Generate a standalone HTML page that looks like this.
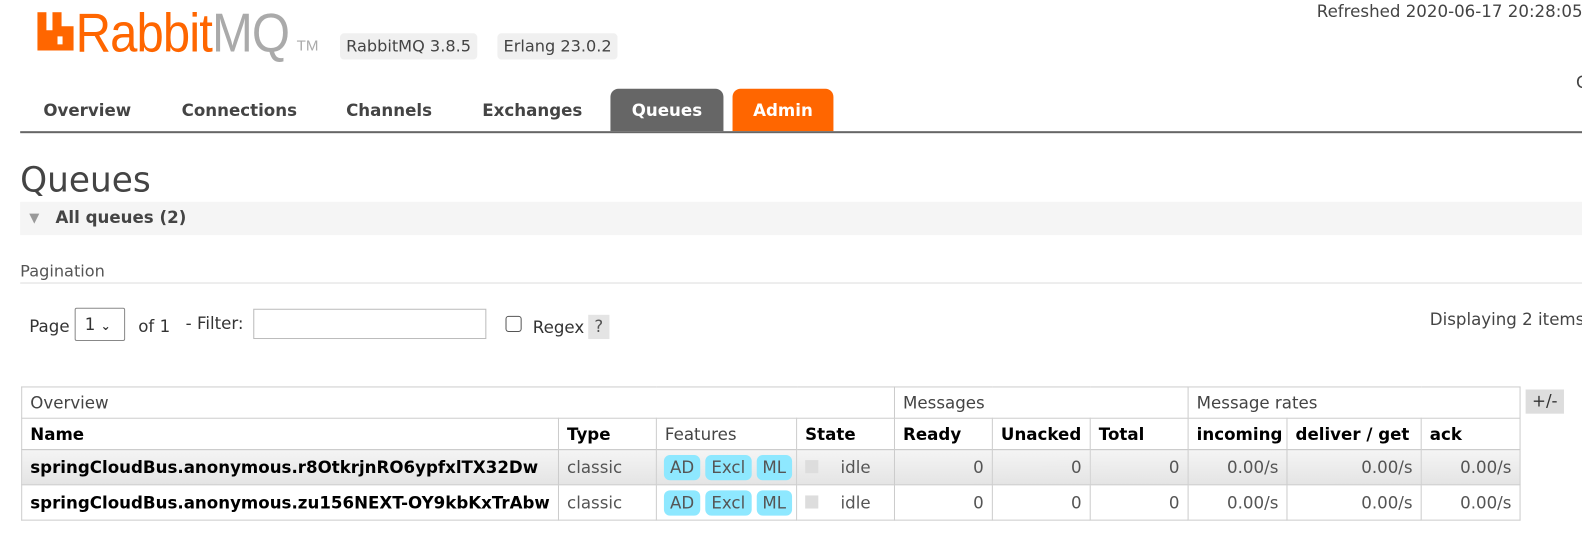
<!DOCTYPE html>
<html><head><meta charset="utf-8"><style>
*{margin:0;padding:0;box-sizing:border-box}
body{width:1582px;height:532px;background:#fff;font-family:"DejaVu Sans","Liberation Sans",sans-serif;color:#444;position:relative;overflow:hidden;font-size:16.5px}
#w{position:absolute;left:0;top:0;width:1582px;height:532px;transform:scale(1.009);transform-origin:0 0}
.a{position:absolute;white-space:nowrap}
.ver{top:33px;height:26px;background:#f0f0f0;border-radius:4px;padding:3px 6px;font-size:16px;color:#444;line-height:20px}
.tab{top:88px;height:42px;line-height:44px;font-weight:bold;font-size:16.5px;color:#444;border-radius:8px 8px 0 0}
table{border-collapse:collapse;position:absolute;left:21px;top:383px;font-size:16.5px;table-layout:fixed;width:1486px}
td{border:1px solid #ccc;padding:0 8px;white-space:nowrap;height:31px;overflow:hidden}
.h2 td{font-weight:bold;color:#000}
.h2 td.n{font-weight:normal;color:#444}
.r td{height:35px;color:#555;background:#fff}
.r1 td{background:linear-gradient(#f4f4f4,#e4e4e4)}
.r td.nm{font-weight:bold;color:#000;padding-left:8px}
.num{text-align:right}
.f{display:inline-block;background:#8ee8ff;border-radius:6px;padding:2px 6px;margin-right:5px;color:#555;line-height:21px}
</style></head><body><div id="w">
<svg class="a" style="left:37px;top:12px" width="36" height="38" viewBox="0 0 36 38"><path d="M0 0h9v18h6V0h9v14h12v24H0z M20 24v8h5v-8z" fill="#f60" fill-rule="evenodd"/></svg>
<div class="a" style="left:75px;top:2px;font-family:'Liberation Sans',sans-serif;font-size:54px;transform:scaleX(0.9);transform-origin:left top;letter-spacing:-1px"><span style="color:#f60">Rabbit</span><span style="color:#aaa">MQ</span></div>
<div class="a" style="left:294px;top:37px;font-family:'Liberation Sans',sans-serif;font-size:15px;color:#aaa">TM</div>
<div class="a ver" style="left:337px">RabbitMQ 3.8.5</div>
<div class="a ver" style="left:493px">Erlang 23.0.2</div>
<div class="a" style="left:1305px;top:2px;font-size:16.5px;color:#444">Refreshed 2020-06-17 20:28:05</div>
<div class="a" style="left:1562px;top:72px;color:#444">C</div>
<div class="a tab" style="left:43px">Overview</div>
<div class="a tab" style="left:180px">Connections</div>
<div class="a tab" style="left:343px">Channels</div>
<div class="a tab" style="left:478px">Exchanges</div>
<div class="a tab" style="left:605px;width:112px;background:#666;color:#fff;text-align:center">Queues</div>
<div class="a tab" style="left:726px;width:100px;background:#f60;color:#fff;text-align:center">Admin</div>
<div class="a" style="left:20px;top:130px;width:1562px;height:2px;background:#666"></div>
<div class="a" style="left:20px;top:159px;font-size:34px;color:#444">Queues</div>
<div class="a" style="left:20px;top:200px;width:1562px;height:33px;background:#f5f5f5"></div>
<div class="a" style="left:29px;top:206px;color:#999;font-size:13px;line-height:22px">▼</div>
<div class="a" style="left:55px;top:206px;font-weight:bold;color:#444">All queues (2)</div>
<div class="a" style="left:20px;top:259px;font-size:16px;color:#555">Pagination</div>
<div class="a" style="left:20px;top:280px;width:1562px;height:1px;background:#ddd"></div>
<div class="a" style="left:29px;top:314px;color:#333">Page</div>
<div class="a" style="left:74px;top:305px;width:50px;height:33px;border:1px solid #888;border-radius:2px;padding:6px 9px;color:#333">1 <span style="font-size:12px;font-weight:bold">&#8964;</span></div>
<div class="a" style="left:137px;top:314px;color:#333">of 1</div>
<div class="a" style="left:184px;top:311px;color:#333">- Filter:</div>
<div class="a" style="left:251px;top:306px;width:231px;height:30px;border:1px solid #bbb"></div>
<div class="a" style="left:501px;top:313px;width:16px;height:16px;border:1px solid #555;border-radius:3px"></div>
<div class="a" style="left:528px;top:315px;color:#333">Regex</div>
<div class="a" style="left:583px;top:312px;width:21px;height:24px;background:#e4e4e4;text-align:center;line-height:24px;color:#555">?</div>
<div class="a" style="left:1417px;top:307px;color:#444">Displaying 2 items</div>
<div class="a" style="left:1512px;top:386px;width:38px;height:24px;background:#ddd;text-align:center;line-height:24px;color:#333">+/-</div>
<table>
<colgroup><col style="width:532px"><col style="width:97px"><col style="width:139px"><col style="width:97px"><col style="width:97px"><col style="width:97px"><col style="width:97px"><col style="width:98px"><col style="width:133px"><col style="width:98px"></colgroup>
<tr><td colspan="4">Overview</td><td colspan="3">Messages</td><td colspan="3">Message rates</td></tr>
<tr class="h2"><td>Name</td><td>Type</td><td class="n">Features</td><td>State</td><td>Ready</td><td>Unacked</td><td>Total</td><td>incoming</td><td>deliver / get</td><td>ack</td></tr>
<tr class="r r1"><td class="nm">springCloudBus.anonymous.r8OtkrjnRO6ypfxlTX32Dw</td><td>classic</td><td style="padding-left:7px"><span class="f">AD</span><span class="f">Excl</span><span class="f">ML</span></td><td><span style="display:inline-block;width:13px;height:13px;background:#ddd;margin-right:22px"></span>idle</td><td class="num">0</td><td class="num">0</td><td class="num">0</td><td class="num">0.00/s</td><td class="num">0.00/s</td><td class="num">0.00/s</td></tr>
<tr class="r"><td class="nm">springCloudBus.anonymous.zu156NEXT-OY9kbKxTrAbw</td><td>classic</td><td style="padding-left:7px"><span class="f">AD</span><span class="f">Excl</span><span class="f">ML</span></td><td><span style="display:inline-block;width:13px;height:13px;background:#ddd;margin-right:22px"></span>idle</td><td class="num">0</td><td class="num">0</td><td class="num">0</td><td class="num">0.00/s</td><td class="num">0.00/s</td><td class="num">0.00/s</td></tr>
</table>
</div></body></html>
